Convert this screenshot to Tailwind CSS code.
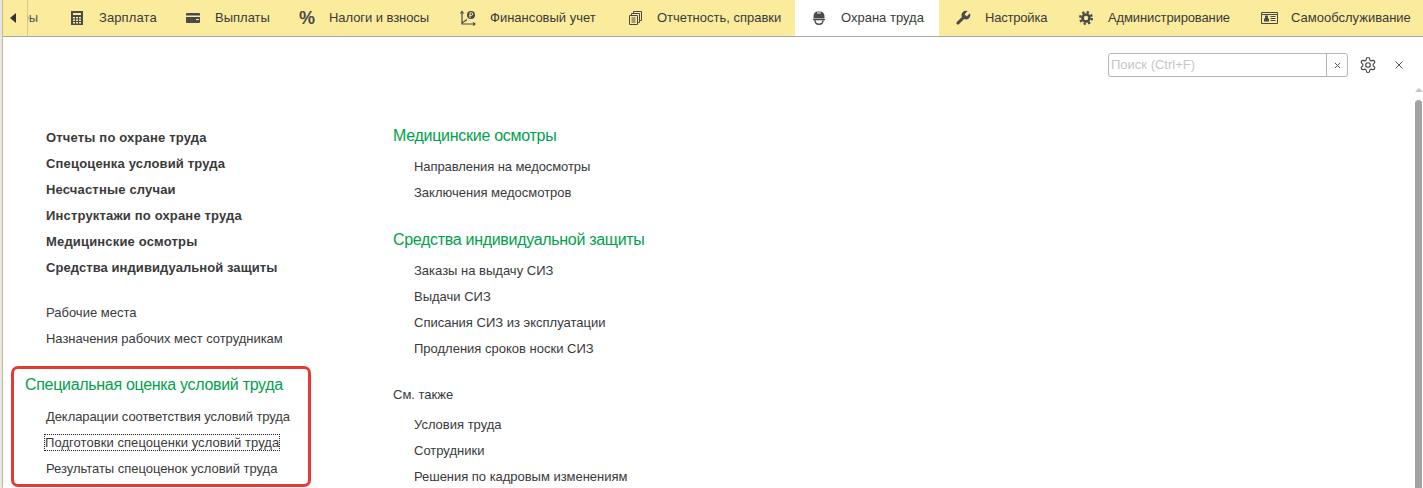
<!DOCTYPE html>
<html lang="ru">
<head>
    <meta charset="UTF-8">
    <title>Охрана труда</title>
    <script src="https://cdn.jsdelivr.net/npm/@tailwindcss/browser@4"></script>
</head>
<body class="bg-white h-[488px] w-[1423px] overflow-hidden flex font-['Liberation_Sans',Arial,sans-serif] text-[13px] text-[#3a3a3a]">
    <!-- left window edge -->
    <div class="w-[3px] shrink-0 bg-[#e6e6e6] border-r border-[#c8b97c]"></div>

    <div class="flex-1 min-w-0 flex flex-col">
        <!-- sections bar -->
        <nav class="h-[37px] shrink-0 bg-[#fbec9d] border-b border-[#a9a9a9] flex leading-[36px] whitespace-nowrap overflow-hidden">
            <button class="w-[25px] h-[36px] shrink-0 border-r border-[#d8c98a] flex items-center justify-center">
                <span class="mr-[5px] w-0 h-0 border-y-[5px] border-y-transparent border-r-[6px] border-r-[#333]"></span>
            </button>
            <div class="w-[25px] shrink-0 overflow-hidden">
                <div class="w-[10px] flex justify-end text-[#555]"><span>ры</span></div>
            </div>

            <a class="w-[116px] shrink-0 flex tracking-[0.1px]">
                <span class="w-[46px] pl-[2px] flex items-center justify-center">
                    <svg width="12" height="14" viewBox="0 0 12 14"><path fill-rule="evenodd" fill="#4a4a4a" d="M0 0h12v14H0zM2 2v2h8V2zM2 6v1.500h2V6zM5 6v1.500h2V6zM8 6v1.500h2V6zM2 8.500V10h2V8.500zM5 8.500V10h2V8.500zM8 8.500V10h2V8.500zM2 11v1.500h2V11zM5 11v1.500h2V11zM8 11v1.500h2V11z"/></svg>
                </span>Зарплата
            </a>
            <a class="w-[114px] shrink-0 flex">
                <span class="w-[46px] pl-[2px] flex items-center justify-center">
                    <svg width="14" height="10" viewBox="0 0 14 10"><path fill="#4a4a4a" d="M1 0h12a1 1 0 0 1 1 1v1.500H0V1a1 1 0 0 1 1-1zM0 4h14v5a1 1 0 0 1-1 1H1a1 1 0 0 1-1-1zM10 6v1h3V6z"/></svg>
                </span>Выплаты
            </a>
            <a class="w-[161px] shrink-0 flex tracking-[-0.07px]">
                <span class="w-[46px] pl-[2px] flex items-center justify-center font-bold text-[18px] text-[#4a4a4a]">%</span>Налоги и взносы
            </a>
            <a class="w-[167px] shrink-0 flex">
                <span class="w-[46px] pl-[2px] flex items-center justify-center">
                    <svg width="16" height="16" viewBox="0 0 16 16" fill="none" stroke="#4a4a4a" stroke-width="1.200"><path d="M2 1.500V14H15"/><path d="M0.500 3.500L2 1.500L3.500 3.500M13 12.500L15 14L13 15.500"/><path d="M2 13L7 9.500"/><circle cx="11" cy="5" r="4" fill="#4a4a4a" stroke="none"/><path d="M10 8V2.800h1.400a1.200 1.200 0 0 1 0 2.600H9.200" stroke="#fbec9d" stroke-width="1"/></svg>
                </span>Финансовый учет
            </a>
            <a class="w-[184px] shrink-0 flex">
                <span class="w-[46px] pl-[2px] flex items-center justify-center">
                    <svg width="13" height="14" viewBox="0 0 13 14" fill="none" stroke="#4a4a4a"><path d="M4.500 2V.5H12.500V9.500H11"/><path d="M2.500 4V2.500H10.500V11.500H9"/><path d="M.5 4.500H8.500V13.500H.5z"/><path d="M2.500 7H6.500M2.500 9H6.500M2.500 11H6.500"/></svg>
                </span>Отчетность, справки
            </a>
            <a class="w-[144px] shrink-0 flex bg-white h-[36px]">
                <span class="w-[46px] pl-[2px] flex items-center justify-center">
                    <svg width="12" height="14" viewBox="0 0 12 14"><path fill="#4a4a4a" d="M4.500.300V3h1V.1h1V3h1V.300A5.500 5.500 0 0 1 11.500 5.500V7.500H.5V5.500A5.500 5.500 0 0 1 4.500.300z"/><path fill="#4a4a4a" d="M0 8h12v1.300H0z"/><path fill="none" stroke="#4a4a4a" stroke-width="1.400" d="M2 9.300C2 11.800 3.800 13.300 6 13.300S10 11.800 10 9.300"/></svg>
                </span>Охрана труда
            </a>
            <a class="w-[123px] shrink-0 flex tracking-[-0.2px]">
                <span class="w-[46px] pl-[2px] flex items-center justify-center">
                    <svg width="16" height="16" viewBox="1 1 22 22"><path fill="#4a4a4a" d="M14.700 6.300a1 1 0 0 0 0 1.400l1.600 1.600a1 1 0 0 0 1.400 0l3.770-3.770a6 6 0 0 1-7.940 7.940l-6.910 6.910a2.120 2.120 0 0 1-3-3l6.910-6.910a6 6 0 0 1 7.940-7.940l-3.760 3.760z"/></svg>
                </span>Настройка
            </a>
            <a class="w-[183px] shrink-0 flex tracking-[-0.12px]">
                <span class="w-[46px] pl-[2px] flex items-center justify-center">
                    <svg width="14" height="14" viewBox="0 0 14 14" fill="none" stroke="#4a4a4a"><circle cx="7" cy="7" r="3.500" stroke-width="2.600"/><circle cx="7" cy="7" r="5.800" stroke-width="2.400" stroke-dasharray="2.300 2.250"/></svg>
                </span>Администрирование
            </a>
            <a class="shrink-0 flex">
                <span class="w-[46px] pl-[2px] flex items-center justify-center">
                    <svg width="17" height="12" viewBox="0 0 17 12"><path fill="none" stroke="#4a4a4a" d="M.5.500h16v11H.5z"/><path fill="none" stroke="#4a4a4a" d="M1 2.500h15"/><path fill="#4a4a4a" d="M4 3.500h3v3h1v3H3v-3h1zM9.500 4h5v1h-5zM9.500 6h5v1h-5zM9.500 8h5v1h-5z"/></svg>
                </span>Самообслуживание
            </a>
        </nav>

        <!-- content -->
        <main class="flex-1 min-h-0 relative overflow-hidden">
            <!-- search row -->
            <div class="flex items-center justify-end h-[24px] mt-[16px]">
                <div class="w-[240px] h-[24px] flex border border-[#b5b5b5] rounded-[3px]">
                    <span class="flex-1 pl-[2px] leading-[22px] text-[#c9c4c9]">Поиск (Ctrl+F)</span>
                    <span class="w-[21px] border-l border-[#b5b5b5] flex items-center justify-center">
                        <svg width="7" height="7" viewBox="0 0 7 7" stroke="#555"><path d="M1 1L6 6M6 1L1 6"/></svg>
                    </span>
                </div>
                <svg class="ml-[11px]" width="18" height="18" viewBox="0 0 24 24" fill="none" stroke="#4a4a4a" stroke-width="1.600"><path d="M12.220 2h-.44a2 2 0 0 0-2 2v.18a2 2 0 0 1-1 1.730l-.43.25a2 2 0 0 1-2 0l-.15-.08a2 2 0 0 0-2.730.73l-.22.38a2 2 0 0 0 .73 2.730l.15.1a2 2 0 0 1 1 1.720v.51a2 2 0 0 1-1 1.740l-.15.09a2 2 0 0 0-.73 2.730l.22.38a2 2 0 0 0 2.730.73l.15-.08a2 2 0 0 1 2 0l.43.25a2 2 0 0 1 1 1.730V20a2 2 0 0 0 2 2h.44a2 2 0 0 0 2-2v-.18a2 2 0 0 1 1-1.730l.43-.25a2 2 0 0 1 2 0l.15.08a2 2 0 0 0 2.730-.73l.22-.39a2 2 0 0 0-.73-2.730l-.15-.08a2 2 0 0 1-1-1.740v-.5a2 2 0 0 1 1-1.740l.15-.09a2 2 0 0 0 .73-2.730l-.22-.38a2 2 0 0 0-2.730-.73l-.15.08a2 2 0 0 1-2 0l-.43-.25a2 2 0 0 1-1-1.730V4a2 2 0 0 0-2-2z"/><circle cx="12" cy="12" r="3"/></svg>
                <svg class="ml-[18px] mr-[20px]" width="8" height="8" viewBox="0 0 8 8" stroke="#555"><path d="M.5.500L7.500 7.500M7.500.500L.5 7.500"/></svg>
            </div>

            <div class="flex mt-[46px] items-start">
                <!-- left column -->
                <div class="w-[390px] shrink-0 pt-[2px] pl-[43px] leading-[26px]">
                    <ul class="font-bold tracking-[0.17px]">
                        <li>Отчеты по охране труда</li>
                        <li>Спецоценка условий труда</li>
                        <li>Несчастные случаи</li>
                        <li>Инструктажи по охране труда</li>
                        <li>Медицинские осмотры</li>
                        <li class="tracking-[0.07px]">Средства индивидуальной защиты</li>
                    </ul>
                    <ul class="mt-[19px]">
                        <li>Рабочие места</li>
                        <li class="tracking-[-0.03px]">Назначения рабочих мест сотрудникам</li>
                    </ul>
                    <h3 class="mt-[20px] mb-[6px] -ml-[21px] text-[16px] tracking-[-0.31px] text-[#00a14b]">Специальная оценка условий труда</h3>
                    <ul>
                        <li class="tracking-[-0.08px]">Декларации соответствия условий труда</li>
                        <li class="tracking-[0.06px]"><span class="-ml-[2px] px-[1px] py-[1px] outline outline-dotted outline-1 -outline-offset-1 outline-[#222]">Подготовки спецоценки условий труда</span></li>
                        <li class="tracking-[-0.03px]">Результаты спецоценок условий труда</li>
                    </ul>
                </div>

                <!-- right column -->
                <div class="leading-[26px]">
                    <h3 class="text-[16px] tracking-[-0.28px] text-[#00a14b]">Медицинские осмотры</h3>
                    <ul class="mt-[5px] pl-[21px]">
                        <li class="tracking-[-0.08px]">Направления на медосмотры</li>
                        <li>Заключения медосмотров</li>
                    </ul>
                    <h3 class="mt-[21px] text-[16px] tracking-[-0.31px] text-[#00a14b]">Средства индивидуальной защиты</h3>
                    <ul class="mt-[5px] pl-[21px]">
                        <li>Заказы на выдачу СИЗ</li>
                        <li>Выдачи СИЗ</li>
                        <li>Списания СИЗ из эксплуатации</li>
                        <li>Продления сроков носки СИЗ</li>
                    </ul>
                    <p class="mt-[20px]">См. также</p>
                    <ul class="mt-[4px] pl-[21px]">
                        <li>Условия труда</li>
                        <li>Сотрудники</li>
                        <li class="tracking-[-0.03px]">Решения по кадровым изменениям</li>
                    </ul>
                </div>
            </div>

            <!-- scrollbar -->
            <div class="absolute right-[1px] top-[51px] bottom-0 w-[7px] flex flex-col items-center">
                <span class="w-0 h-0 border-x-[4px] border-x-transparent border-b-[4px] border-b-[#c4c4c4]"></span>
                <span class="mt-[8px] flex-1 w-[7px] rounded-t-[4px] bg-[#a3a3a3]"></span>
            </div>

            <!-- red annotation frame -->
            <div class="absolute left-[8px] top-[329px] w-[300px] h-[121px] border-[3px] border-[#e53a33] rounded-[7px]"></div>
        </main>
    </div>
</body>
</html>
